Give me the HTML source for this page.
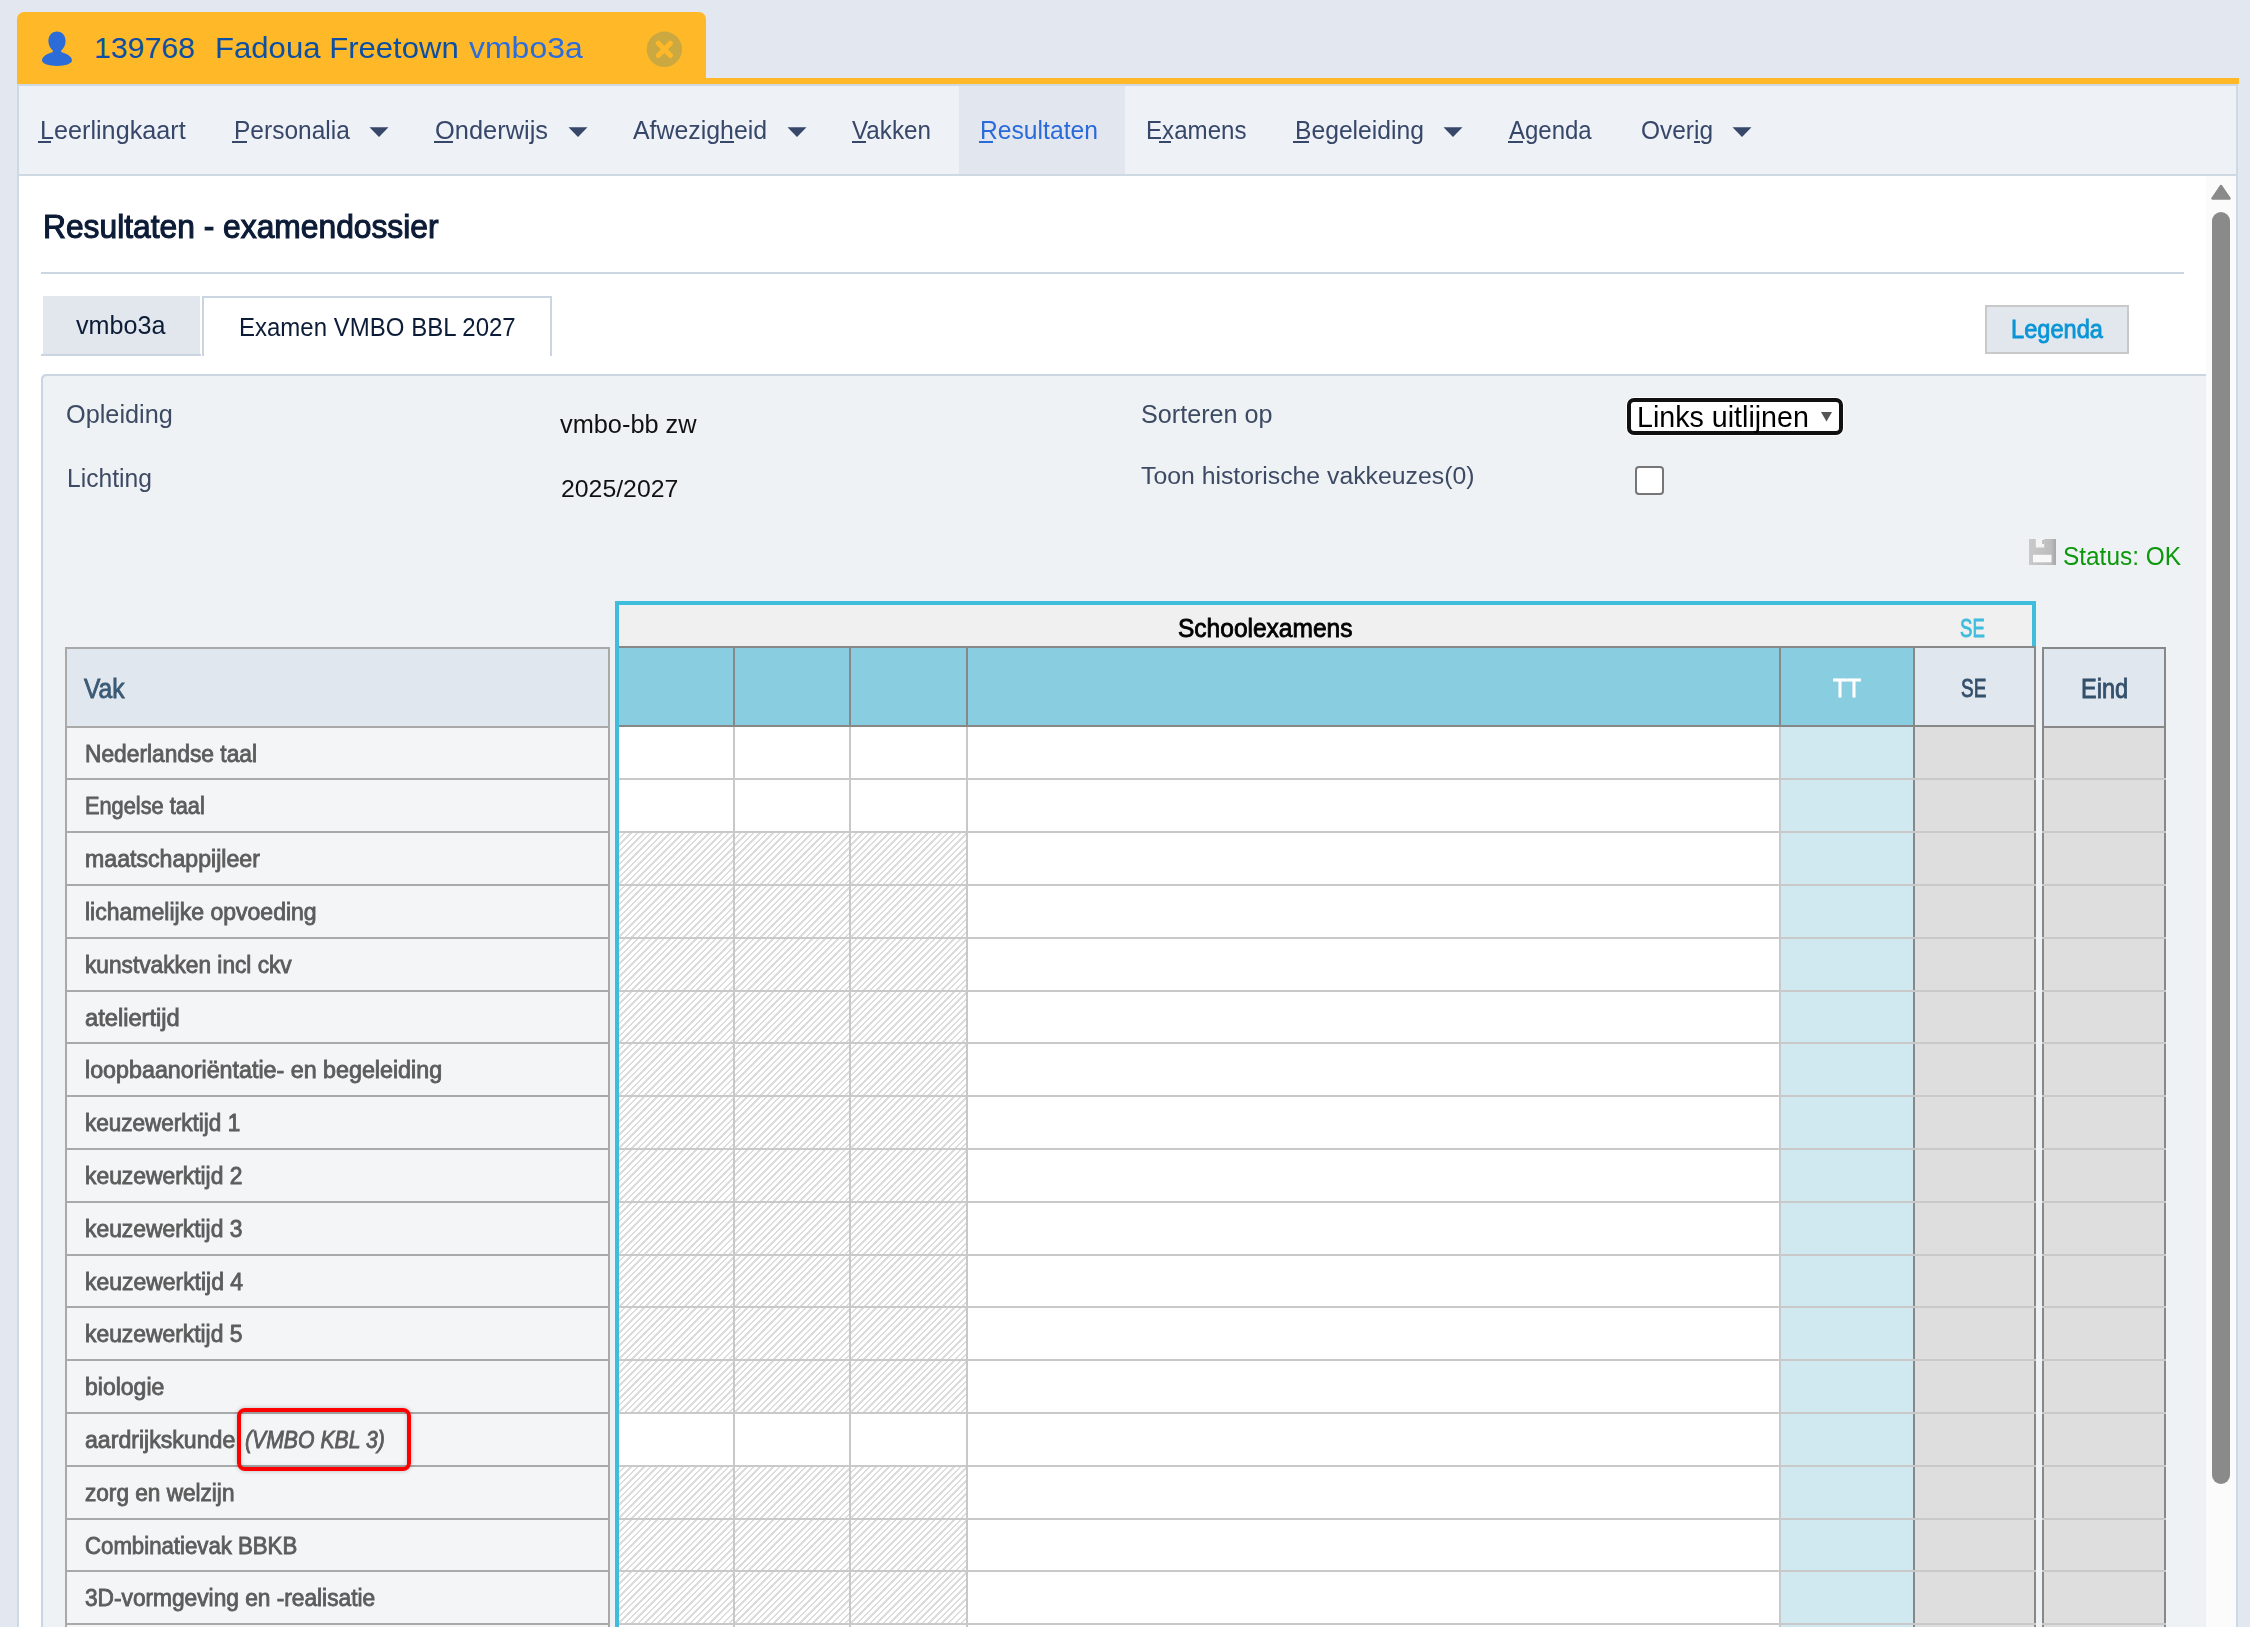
<!DOCTYPE html>
<html><head><meta charset="utf-8"><title>Resultaten - examendossier</title>
<style>
html,body{margin:0;padding:0;}
body{width:2250px;height:1627px;overflow:hidden;position:relative;background:#e3e7ef;font-family:"Liberation Sans",sans-serif;}
.r{position:absolute;box-sizing:content-box;}
.t{position:absolute;white-space:nowrap;transform-origin:0 0;}
</style></head><body>
<div class="r" style="left:17px;top:12px;width:689px;height:72px;background:#ffb928;border-radius:7px 7px 0 0;"></div>
<div class="r" style="left:17px;top:78px;width:2222px;height:6px;background:#ffb928;"></div>
<div class="r" style="left:17px;top:84px;width:2221px;height:1543px;background:#cfd9e4;"></div>
<div class="r" style="left:19px;top:86px;width:2217px;height:88px;background:#eef1f5;"></div>
<div class="r" style="left:959px;top:86px;width:166px;height:88px;background:#e2e7ef;"></div>
<div class="r" style="left:19px;top:176px;width:2217px;height:1451px;background:#ffffff;"></div>
<svg class="r" style="left:38px;top:28px" width="38" height="42" viewBox="0 0 38 42">
<path fill="#2b6cd9" d="M19 3.5c5.2 0 8.6 4.2 8.6 9.6 0 4.2-2 7.6-4.4 9.3l0 1.6c5.4 1.6 10.8 4.4 10.8 8.3 0 3.6-6.8 5.6-15 5.6s-15-2-15-5.6c0-3.9 5.4-6.7 10.8-8.3l0-1.6c-2.4-1.7-4.4-5.1-4.4-9.3 0-5.4 3.4-9.6 8.6-9.6z"/>
</svg>
<svg class="r" style="left:646px;top:31px" width="37" height="37" viewBox="0 0 37 37">
<circle cx="18.4" cy="18.3" r="17.7" fill="#cca840"/>
<path d="M12.3 12.2L24.5 24.4M24.5 12.2L12.3 24.4" stroke="#ffb928" stroke-width="5" stroke-linecap="round"/>
</svg>
<div class="t" style="left:94.00px;top:33.01px;font-size:30.23px;line-height:30.23px;color:#0c4fa3;">139768<span class="bm" style="display:inline-block;width:0;height:0;vertical-align:baseline"></span></div>
<div class="t" style="left:215.00px;top:33.01px;font-size:30.23px;line-height:30.23px;color:#0c4fa3;transform:scaleX(1.0295);">Fadoua Freetown<span class="bm" style="display:inline-block;width:0;height:0;vertical-align:baseline"></span></div>
<div class="t" style="left:469.40px;top:33.01px;font-size:30.23px;line-height:30.23px;color:#2d6ddb;transform:scaleX(1.0580);">vmbo3a<span class="bm" style="display:inline-block;width:0;height:0;vertical-align:baseline"></span></div>
<div class="t" style="left:40.20px;top:118.01px;font-size:25.15px;line-height:25.15px;color:#37476a;transform:scaleX(1.0021);">Leerlingkaart<span class="bm" style="display:inline-block;width:0;height:0;vertical-align:baseline"></span></div>
<div class="r" style="left:38px;top:141px;width:13px;height:2px;background:#37476a;"></div>
<div class="t" style="left:234.00px;top:118.01px;font-size:25.15px;line-height:25.15px;color:#37476a;transform:scaleX(0.9748);">Personalia<span class="bm" style="display:inline-block;width:0;height:0;vertical-align:baseline"></span></div>
<div class="r" style="left:232px;top:141px;width:15px;height:2px;background:#37476a;"></div>
<svg class="r" style="left:369px;top:126px" width="20" height="12" viewBox="0 0 20 12"><path d="M0.5 1.2h19L10 11z" fill="#37476a"/></svg>
<div class="t" style="left:435.00px;top:118.01px;font-size:25.15px;line-height:25.15px;color:#37476a;transform:scaleX(1.0112);">Onderwijs<span class="bm" style="display:inline-block;width:0;height:0;vertical-align:baseline"></span></div>
<div class="r" style="left:434px;top:141px;width:19px;height:2px;background:#37476a;"></div>
<svg class="r" style="left:568px;top:126px" width="20" height="12" viewBox="0 0 20 12"><path d="M0.5 1.2h19L10 11z" fill="#37476a"/></svg>
<div class="t" style="left:633.00px;top:118.01px;font-size:25.15px;line-height:25.15px;color:#37476a;transform:scaleX(0.9889);">Afwezigheid<span class="bm" style="display:inline-block;width:0;height:0;vertical-align:baseline"></span></div>
<div class="r" style="left:720px;top:141px;width:14px;height:2px;background:#37476a;"></div>
<svg class="r" style="left:787px;top:126px" width="20" height="12" viewBox="0 0 20 12"><path d="M0.5 1.2h19L10 11z" fill="#37476a"/></svg>
<div class="t" style="left:852.00px;top:118.01px;font-size:25.15px;line-height:25.15px;color:#37476a;transform:scaleX(0.9634);">Vakken<span class="bm" style="display:inline-block;width:0;height:0;vertical-align:baseline"></span></div>
<div class="r" style="left:852px;top:141px;width:14px;height:2px;background:#37476a;"></div>
<div class="t" style="left:980.00px;top:118.01px;font-size:25.15px;line-height:25.15px;color:#2a6bd9;transform:scaleX(0.9813);">Resultaten<span class="bm" style="display:inline-block;width:0;height:0;vertical-align:baseline"></span></div>
<div class="r" style="left:979px;top:141px;width:14px;height:2px;background:#2a6bd9;"></div>
<div class="t" style="left:1146.00px;top:118.01px;font-size:25.15px;line-height:25.15px;color:#37476a;transform:scaleX(0.9594);">Examens<span class="bm" style="display:inline-block;width:0;height:0;vertical-align:baseline"></span></div>
<div class="r" style="left:1159px;top:141px;width:12px;height:2px;background:#37476a;"></div>
<div class="t" style="left:1295.00px;top:118.01px;font-size:25.15px;line-height:25.15px;color:#37476a;transform:scaleX(0.9810);">Begeleiding<span class="bm" style="display:inline-block;width:0;height:0;vertical-align:baseline"></span></div>
<div class="r" style="left:1293px;top:141px;width:16px;height:2px;background:#37476a;"></div>
<svg class="r" style="left:1443px;top:126px" width="20" height="12" viewBox="0 0 20 12"><path d="M0.5 1.2h19L10 11z" fill="#37476a"/></svg>
<div class="t" style="left:1509.00px;top:118.01px;font-size:25.15px;line-height:25.15px;color:#37476a;transform:scaleX(0.9540);">Agenda<span class="bm" style="display:inline-block;width:0;height:0;vertical-align:baseline"></span></div>
<div class="r" style="left:1508px;top:141px;width:15px;height:2px;background:#37476a;"></div>
<div class="t" style="left:1641.00px;top:118.01px;font-size:25.15px;line-height:25.15px;color:#37476a;transform:scaleX(0.9730);">Overig<span class="bm" style="display:inline-block;width:0;height:0;vertical-align:baseline"></span></div>
<div class="r" style="left:1694px;top:141px;width:6px;height:2px;background:#37476a;"></div>
<svg class="r" style="left:1732px;top:126px" width="20" height="12" viewBox="0 0 20 12"><path d="M0.5 1.2h19L10 11z" fill="#37476a"/></svg>
<div class="r" style="left:2206px;top:176px;width:30px;height:1451px;background:#fbfbfb;"></div>
<svg class="r" style="left:2211px;top:184px" width="20" height="17" viewBox="0 0 20 17"><path d="M10 2L18.5 14.5H1.5Z" fill="#8a8a8a" stroke="#8a8a8a" stroke-width="2.5" stroke-linejoin="round"/></svg>
<div class="r" style="left:2212px;top:212px;width:18px;height:1272px;background:#8a8a8a;border-radius:9px;"></div>
<div class="t" style="left:42.55px;top:211.00px;font-size:32.63px;line-height:32.63px;color:#0c1b36;-webkit-text-stroke:1.10px #0c1b36;transform:scaleX(0.9738);">Resultaten - examendossier<span class="bm" style="display:inline-block;width:0;height:0;vertical-align:baseline"></span></div>
<div class="r" style="left:41px;top:272px;width:2143px;height:2px;background:#cdd7e3;"></div>
<div class="r" style="left:41px;top:354px;width:160px;height:2px;background:#cbd5e1;"></div>
<div class="r" style="left:43px;top:296px;width:157px;height:58px;background:#e2e7ee;"></div>
<div class="r" style="left:202px;top:296px;width:350px;height:60px;background:#cbd5e1;"></div>
<div class="r" style="left:204px;top:298px;width:346px;height:58px;background:#ffffff;"></div>
<div class="t" style="left:76.00px;top:312.01px;font-size:26.16px;line-height:26.16px;color:#0c1b36;transform:scaleX(0.9619);">vmbo3a<span class="bm" style="display:inline-block;width:0;height:0;vertical-align:baseline"></span></div>
<div class="t" style="left:238.70px;top:315.01px;font-size:25.00px;line-height:25.00px;color:#0c1b36;transform:scaleX(0.9604);">Examen VMBO BBL 2027<span class="bm" style="display:inline-block;width:0;height:0;vertical-align:baseline"></span></div>
<div class="r" style="left:1985px;top:305px;width:144px;height:49px;background:#c9c9c9;"></div>
<div class="r" style="left:1987px;top:307px;width:140px;height:45px;background:#e2e7ee;"></div>
<div class="t" style="left:2011.42px;top:316.01px;font-size:26.13px;line-height:26.13px;color:#0b95d6;-webkit-text-stroke:0.85px #0b95d6;transform:scaleX(0.9034);">Legenda<span class="bm" style="display:inline-block;width:0;height:0;vertical-align:baseline"></span></div>
<div class="r" style="left:41px;top:374px;width:2165px;height:1253px;background:#cbd5e1;border-top-left-radius:5px;"></div>
<div class="r" style="left:43px;top:376px;width:2163px;height:1251px;background:#eef2f5;border-top-left-radius:4px;"></div>
<div class="t" style="left:66.00px;top:402.01px;font-size:25.15px;line-height:25.15px;color:#3d4a63;transform:scaleX(1.0052);">Opleiding<span class="bm" style="display:inline-block;width:0;height:0;vertical-align:baseline"></span></div>
<div class="t" style="left:67.00px;top:466.01px;font-size:25.15px;line-height:25.15px;color:#3d4a63;transform:scaleX(0.9798);">Lichting<span class="bm" style="display:inline-block;width:0;height:0;vertical-align:baseline"></span></div>
<div class="t" style="left:560.20px;top:412.01px;font-size:25.00px;line-height:25.00px;color:#111111;transform:scaleX(1.0133);">vmbo-bb zw<span class="bm" style="display:inline-block;width:0;height:0;vertical-align:baseline"></span></div>
<div class="t" style="left:560.70px;top:477.00px;font-size:24.71px;line-height:24.71px;color:#111111;transform:scaleX(1.0047);">2025/2027<span class="bm" style="display:inline-block;width:0;height:0;vertical-align:baseline"></span></div>
<div class="t" style="left:1141.00px;top:402.01px;font-size:24.86px;line-height:24.86px;color:#3d4a63;transform:scaleX(1.0127);">Sorteren op<span class="bm" style="display:inline-block;width:0;height:0;vertical-align:baseline"></span></div>
<div class="t" style="left:1141.00px;top:464.00px;font-size:24.56px;line-height:24.56px;color:#3d4a63;transform:scaleX(1.0100);">Toon historische vakkeuzes(0)<span class="bm" style="display:inline-block;width:0;height:0;vertical-align:baseline"></span></div>
<div class="r" style="left:1626px;top:397px;width:218px;height:39px;background:#ffffff;border-radius:8px;"></div>
<div class="r" style="left:1627px;top:398px;width:208px;height:29px;border:4px solid #111;border-radius:7px;background:#fff"></div>
<div class="t" style="left:1637.00px;top:402.01px;font-size:29.80px;line-height:29.80px;color:#000;transform:scaleX(0.9609);">Links uitlijnen<span class="bm" style="display:inline-block;width:0;height:0;vertical-align:baseline"></span></div>
<svg class="r" style="left:1820px;top:411px" width="13" height="11" viewBox="0 0 13 11"><path d="M1 1h11L6.5 10.5z" fill="#555"/></svg>
<div class="r" style="left:1635px;top:466px;width:25px;height:25px;border:2px solid #767676;border-radius:4px;background:#fff"></div>
<svg class="r" style="left:2029px;top:539px" width="27" height="26" viewBox="0 0 27 26">
<defs><linearGradient id="fg" x1="0" y1="0" x2="1" y2="0"><stop offset="0" stop-color="#c9c9c9"/><stop offset="0.8" stop-color="#bdbdbd"/><stop offset="1" stop-color="#a6a6ae"/></linearGradient><filter id="fb"><feGaussianBlur stdDeviation="0.6"/></filter></defs>
<rect x="0" y="0" width="27" height="26" fill="url(#fg)"/>
<g filter="url(#fb)"><rect x="6.8" y="-2" width="8.4" height="10.5" fill="#f4f4f4"/>
<rect x="13.5" y="1" width="1.2" height="4" fill="#9a9a9a"/>
<rect x="4" y="15.8" width="18.5" height="7.5" fill="#f8f8f8"/></g>
</svg>
<div class="t" style="left:2063.00px;top:543.01px;font-size:26.16px;line-height:26.16px;color:#0b980b;transform:scaleX(0.9328);">Status: OK<span class="bm" style="display:inline-block;width:0;height:0;vertical-align:baseline"></span></div>
<div class="r" style="left:65px;top:647px;width:545px;height:980px;background:#a9a9a9;"></div>
<div class="r" style="left:67px;top:649px;width:541px;height:77px;background:#e1e7ee;"></div>
<div class="r" style="left:67px;top:728px;width:541px;height:50px;background:#f4f5f7;"></div>
<div class="r" style="left:67px;top:780px;width:541px;height:51px;background:#f4f5f7;"></div>
<div class="r" style="left:67px;top:833px;width:541px;height:51px;background:#f4f5f7;"></div>
<div class="r" style="left:67px;top:886px;width:541px;height:51px;background:#f4f5f7;"></div>
<div class="r" style="left:67px;top:939px;width:541px;height:51px;background:#f4f5f7;"></div>
<div class="r" style="left:67px;top:992px;width:541px;height:50px;background:#f4f5f7;"></div>
<div class="r" style="left:67px;top:1044px;width:541px;height:51px;background:#f4f5f7;"></div>
<div class="r" style="left:67px;top:1097px;width:541px;height:51px;background:#f4f5f7;"></div>
<div class="r" style="left:67px;top:1150px;width:541px;height:51px;background:#f4f5f7;"></div>
<div class="r" style="left:67px;top:1203px;width:541px;height:51px;background:#f4f5f7;"></div>
<div class="r" style="left:67px;top:1256px;width:541px;height:50px;background:#f4f5f7;"></div>
<div class="r" style="left:67px;top:1308px;width:541px;height:51px;background:#f4f5f7;"></div>
<div class="r" style="left:67px;top:1361px;width:541px;height:51px;background:#f4f5f7;"></div>
<div class="r" style="left:67px;top:1414px;width:541px;height:51px;background:#f4f5f7;"></div>
<div class="r" style="left:67px;top:1467px;width:541px;height:51px;background:#f4f5f7;"></div>
<div class="r" style="left:67px;top:1520px;width:541px;height:50px;background:#f4f5f7;"></div>
<div class="r" style="left:67px;top:1572px;width:541px;height:51px;background:#f4f5f7;"></div>
<div class="r" style="left:67px;top:1625px;width:541px;height:2px;background:#f4f5f7;"></div>
<div class="r" style="left:67px;top:1678px;width:541px;height:-51px;background:#f4f5f7;"></div>
<div class="t" style="left:84.42px;top:675.01px;font-size:27.44px;line-height:27.44px;color:#3b5a75;-webkit-text-stroke:0.85px #3b5a75;transform:scaleX(0.8978);">Vak<span class="bm" style="display:inline-block;width:0;height:0;vertical-align:baseline"></span></div>
<div class="t" style="left:85.42px;top:743.00px;font-size:23.37px;line-height:23.37px;color:#5c5c5c;-webkit-text-stroke:0.85px #5c5c5c;transform:scaleX(0.9740);">Nederlandse taal<span class="bm" style="display:inline-block;width:0;height:0;vertical-align:baseline"></span></div>
<div class="t" style="left:85.42px;top:795.00px;font-size:23.37px;line-height:23.37px;color:#5c5c5c;-webkit-text-stroke:0.85px #5c5c5c;transform:scaleX(0.9311);">Engelse taal<span class="bm" style="display:inline-block;width:0;height:0;vertical-align:baseline"></span></div>
<div class="t" style="left:85.42px;top:848.00px;font-size:23.37px;line-height:23.37px;color:#5c5c5c;-webkit-text-stroke:0.85px #5c5c5c;transform:scaleX(0.9901);">maatschappijleer<span class="bm" style="display:inline-block;width:0;height:0;vertical-align:baseline"></span></div>
<div class="t" style="left:85.42px;top:901.00px;font-size:23.37px;line-height:23.37px;color:#5c5c5c;-webkit-text-stroke:0.85px #5c5c5c;transform:scaleX(0.9857);">lichamelijke opvoeding<span class="bm" style="display:inline-block;width:0;height:0;vertical-align:baseline"></span></div>
<div class="t" style="left:85.42px;top:954.00px;font-size:23.37px;line-height:23.37px;color:#5c5c5c;-webkit-text-stroke:0.85px #5c5c5c;transform:scaleX(0.9707);">kunstvakken incl ckv<span class="bm" style="display:inline-block;width:0;height:0;vertical-align:baseline"></span></div>
<div class="t" style="left:85.42px;top:1007.00px;font-size:23.37px;line-height:23.37px;color:#5c5c5c;-webkit-text-stroke:0.85px #5c5c5c;transform:scaleX(1.0134);">ateliertijd<span class="bm" style="display:inline-block;width:0;height:0;vertical-align:baseline"></span></div>
<div class="t" style="left:85.42px;top:1059.00px;font-size:23.37px;line-height:23.37px;color:#5c5c5c;-webkit-text-stroke:0.85px #5c5c5c;transform:scaleX(0.9962);">loopbaanoriëntatie- en begeleiding<span class="bm" style="display:inline-block;width:0;height:0;vertical-align:baseline"></span></div>
<div class="t" style="left:85.42px;top:1112.00px;font-size:23.37px;line-height:23.37px;color:#5c5c5c;-webkit-text-stroke:0.85px #5c5c5c;transform:scaleX(0.9637);">keuzewerktijd 1<span class="bm" style="display:inline-block;width:0;height:0;vertical-align:baseline"></span></div>
<div class="t" style="left:85.42px;top:1165.00px;font-size:23.37px;line-height:23.37px;color:#5c5c5c;-webkit-text-stroke:0.85px #5c5c5c;transform:scaleX(0.9780);">keuzewerktijd 2<span class="bm" style="display:inline-block;width:0;height:0;vertical-align:baseline"></span></div>
<div class="t" style="left:85.42px;top:1218.00px;font-size:23.37px;line-height:23.37px;color:#5c5c5c;-webkit-text-stroke:0.85px #5c5c5c;transform:scaleX(0.9780);">keuzewerktijd 3<span class="bm" style="display:inline-block;width:0;height:0;vertical-align:baseline"></span></div>
<div class="t" style="left:85.42px;top:1271.00px;font-size:23.37px;line-height:23.37px;color:#5c5c5c;-webkit-text-stroke:0.85px #5c5c5c;transform:scaleX(0.9817);">keuzewerktijd 4<span class="bm" style="display:inline-block;width:0;height:0;vertical-align:baseline"></span></div>
<div class="t" style="left:85.42px;top:1323.00px;font-size:23.37px;line-height:23.37px;color:#5c5c5c;-webkit-text-stroke:0.85px #5c5c5c;transform:scaleX(0.9780);">keuzewerktijd 5<span class="bm" style="display:inline-block;width:0;height:0;vertical-align:baseline"></span></div>
<div class="t" style="left:85.42px;top:1376.00px;font-size:23.37px;line-height:23.37px;color:#5c5c5c;-webkit-text-stroke:0.85px #5c5c5c;transform:scaleX(0.9845);">biologie<span class="bm" style="display:inline-block;width:0;height:0;vertical-align:baseline"></span></div>
<div class="t" style="left:85.42px;top:1429.00px;font-size:23.37px;line-height:23.37px;color:#5c5c5c;-webkit-text-stroke:0.85px #5c5c5c;transform:scaleX(0.9891);">aardrijkskunde<span class="bm" style="display:inline-block;width:0;height:0;vertical-align:baseline"></span></div>
<div class="t" style="left:85.42px;top:1482.00px;font-size:23.37px;line-height:23.37px;color:#5c5c5c;-webkit-text-stroke:0.85px #5c5c5c;transform:scaleX(0.9673);">zorg en welzijn<span class="bm" style="display:inline-block;width:0;height:0;vertical-align:baseline"></span></div>
<div class="t" style="left:85.42px;top:1535.00px;font-size:23.37px;line-height:23.37px;color:#5c5c5c;-webkit-text-stroke:0.85px #5c5c5c;transform:scaleX(0.9503);">Combinatievak BBKB<span class="bm" style="display:inline-block;width:0;height:0;vertical-align:baseline"></span></div>
<div class="t" style="left:85.42px;top:1587.00px;font-size:23.37px;line-height:23.37px;color:#5c5c5c;-webkit-text-stroke:0.85px #5c5c5c;transform:scaleX(0.9715);">3D-vormgeving en -realisatie<span class="bm" style="display:inline-block;width:0;height:0;vertical-align:baseline"></span></div>
<div class="r" style="left:615px;top:601px;width:1421px;height:4px;background:#40bcdc;"></div>
<div class="r" style="left:615px;top:601px;width:4px;height:1026px;background:#40bcdc;"></div>
<div class="r" style="left:2032px;top:601px;width:4px;height:45px;background:#40bcdc;"></div>
<div class="r" style="left:619px;top:605px;width:1413px;height:41px;background:#f0f0f0;"></div>
<div class="r" style="left:619px;top:646px;width:1417px;height:2px;background:#888888;"></div>
<div class="t" style="left:1178.02px;top:615.01px;font-size:26.27px;line-height:26.27px;color:#000;-webkit-text-stroke:0.85px #000;transform:scaleX(0.9334);">Schoolexamens<span class="bm" style="display:inline-block;width:0;height:0;vertical-align:baseline"></span></div>
<div class="t" style="left:1960.02px;top:615.01px;font-size:26.56px;line-height:26.56px;color:#40bcdc;-webkit-text-stroke:0.85px #40bcdc;transform:scaleX(0.7000);">SE<span class="bm" style="display:inline-block;width:0;height:0;vertical-align:baseline"></span></div>
<div class="r" style="left:619px;top:648px;width:1294px;height:78px;background:#88cde0;"></div>
<div class="r" style="left:1915px;top:648px;width:119px;height:78px;background:#e1e7ef;"></div>
<div class="r" style="left:733px;top:648px;width:2px;height:78px;background:#888888;"></div>
<div class="r" style="left:849px;top:648px;width:2px;height:78px;background:#888888;"></div>
<div class="r" style="left:966px;top:648px;width:2px;height:78px;background:#888888;"></div>
<div class="r" style="left:1779px;top:648px;width:2px;height:78px;background:#888888;"></div>
<div class="r" style="left:1913px;top:648px;width:2px;height:78px;background:#888888;"></div>
<div class="r" style="left:2034px;top:648px;width:2px;height:78px;background:#888888;"></div>
<div class="r" style="left:619px;top:725px;width:1417px;height:2px;background:#888888;"></div>
<div class="t" style="left:1832.83px;top:675.01px;font-size:26.56px;line-height:26.56px;color:#ffffff;-webkit-text-stroke:0.85px #ffffff;transform:scaleX(0.8631);">TT<span class="bm" style="display:inline-block;width:0;height:0;vertical-align:baseline"></span></div>
<div class="t" style="left:1961.42px;top:675.01px;font-size:26.56px;line-height:26.56px;color:#34506b;-webkit-text-stroke:0.85px #34506b;transform:scaleX(0.7169);">SE<span class="bm" style="display:inline-block;width:0;height:0;vertical-align:baseline"></span></div>
<div class="r" style="left:619px;top:727px;width:1160px;height:900px;background:#ffffff;"></div>
<div class="r" style="left:1781px;top:727px;width:132px;height:900px;background:#d0e8ef;"></div>
<div class="r" style="left:1915px;top:727px;width:119px;height:900px;background:#dedede;"></div>
<div class="r" style="left:619px;top:833px;width:114px;height:51px;background:repeating-linear-gradient(135deg,#ffffff 0px,#ffffff 3.1px,#dcdcdc 3.1px,#dcdcdc 4.6px);"></div>
<div class="r" style="left:735px;top:833px;width:114px;height:51px;background:repeating-linear-gradient(135deg,#ffffff 0px,#ffffff 3.1px,#dcdcdc 3.1px,#dcdcdc 4.6px);"></div>
<div class="r" style="left:851px;top:833px;width:115px;height:51px;background:repeating-linear-gradient(135deg,#ffffff 0px,#ffffff 3.1px,#dcdcdc 3.1px,#dcdcdc 4.6px);"></div>
<div class="r" style="left:619px;top:886px;width:114px;height:51px;background:repeating-linear-gradient(135deg,#ffffff 0px,#ffffff 3.1px,#dcdcdc 3.1px,#dcdcdc 4.6px);"></div>
<div class="r" style="left:735px;top:886px;width:114px;height:51px;background:repeating-linear-gradient(135deg,#ffffff 0px,#ffffff 3.1px,#dcdcdc 3.1px,#dcdcdc 4.6px);"></div>
<div class="r" style="left:851px;top:886px;width:115px;height:51px;background:repeating-linear-gradient(135deg,#ffffff 0px,#ffffff 3.1px,#dcdcdc 3.1px,#dcdcdc 4.6px);"></div>
<div class="r" style="left:619px;top:939px;width:114px;height:51px;background:repeating-linear-gradient(135deg,#ffffff 0px,#ffffff 3.1px,#dcdcdc 3.1px,#dcdcdc 4.6px);"></div>
<div class="r" style="left:735px;top:939px;width:114px;height:51px;background:repeating-linear-gradient(135deg,#ffffff 0px,#ffffff 3.1px,#dcdcdc 3.1px,#dcdcdc 4.6px);"></div>
<div class="r" style="left:851px;top:939px;width:115px;height:51px;background:repeating-linear-gradient(135deg,#ffffff 0px,#ffffff 3.1px,#dcdcdc 3.1px,#dcdcdc 4.6px);"></div>
<div class="r" style="left:619px;top:992px;width:114px;height:50px;background:repeating-linear-gradient(135deg,#ffffff 0px,#ffffff 3.1px,#dcdcdc 3.1px,#dcdcdc 4.6px);"></div>
<div class="r" style="left:735px;top:992px;width:114px;height:50px;background:repeating-linear-gradient(135deg,#ffffff 0px,#ffffff 3.1px,#dcdcdc 3.1px,#dcdcdc 4.6px);"></div>
<div class="r" style="left:851px;top:992px;width:115px;height:50px;background:repeating-linear-gradient(135deg,#ffffff 0px,#ffffff 3.1px,#dcdcdc 3.1px,#dcdcdc 4.6px);"></div>
<div class="r" style="left:619px;top:1044px;width:114px;height:51px;background:repeating-linear-gradient(135deg,#ffffff 0px,#ffffff 3.1px,#dcdcdc 3.1px,#dcdcdc 4.6px);"></div>
<div class="r" style="left:735px;top:1044px;width:114px;height:51px;background:repeating-linear-gradient(135deg,#ffffff 0px,#ffffff 3.1px,#dcdcdc 3.1px,#dcdcdc 4.6px);"></div>
<div class="r" style="left:851px;top:1044px;width:115px;height:51px;background:repeating-linear-gradient(135deg,#ffffff 0px,#ffffff 3.1px,#dcdcdc 3.1px,#dcdcdc 4.6px);"></div>
<div class="r" style="left:619px;top:1097px;width:114px;height:51px;background:repeating-linear-gradient(135deg,#ffffff 0px,#ffffff 3.1px,#dcdcdc 3.1px,#dcdcdc 4.6px);"></div>
<div class="r" style="left:735px;top:1097px;width:114px;height:51px;background:repeating-linear-gradient(135deg,#ffffff 0px,#ffffff 3.1px,#dcdcdc 3.1px,#dcdcdc 4.6px);"></div>
<div class="r" style="left:851px;top:1097px;width:115px;height:51px;background:repeating-linear-gradient(135deg,#ffffff 0px,#ffffff 3.1px,#dcdcdc 3.1px,#dcdcdc 4.6px);"></div>
<div class="r" style="left:619px;top:1150px;width:114px;height:51px;background:repeating-linear-gradient(135deg,#ffffff 0px,#ffffff 3.1px,#dcdcdc 3.1px,#dcdcdc 4.6px);"></div>
<div class="r" style="left:735px;top:1150px;width:114px;height:51px;background:repeating-linear-gradient(135deg,#ffffff 0px,#ffffff 3.1px,#dcdcdc 3.1px,#dcdcdc 4.6px);"></div>
<div class="r" style="left:851px;top:1150px;width:115px;height:51px;background:repeating-linear-gradient(135deg,#ffffff 0px,#ffffff 3.1px,#dcdcdc 3.1px,#dcdcdc 4.6px);"></div>
<div class="r" style="left:619px;top:1203px;width:114px;height:51px;background:repeating-linear-gradient(135deg,#ffffff 0px,#ffffff 3.1px,#dcdcdc 3.1px,#dcdcdc 4.6px);"></div>
<div class="r" style="left:735px;top:1203px;width:114px;height:51px;background:repeating-linear-gradient(135deg,#ffffff 0px,#ffffff 3.1px,#dcdcdc 3.1px,#dcdcdc 4.6px);"></div>
<div class="r" style="left:851px;top:1203px;width:115px;height:51px;background:repeating-linear-gradient(135deg,#ffffff 0px,#ffffff 3.1px,#dcdcdc 3.1px,#dcdcdc 4.6px);"></div>
<div class="r" style="left:619px;top:1256px;width:114px;height:50px;background:repeating-linear-gradient(135deg,#ffffff 0px,#ffffff 3.1px,#dcdcdc 3.1px,#dcdcdc 4.6px);"></div>
<div class="r" style="left:735px;top:1256px;width:114px;height:50px;background:repeating-linear-gradient(135deg,#ffffff 0px,#ffffff 3.1px,#dcdcdc 3.1px,#dcdcdc 4.6px);"></div>
<div class="r" style="left:851px;top:1256px;width:115px;height:50px;background:repeating-linear-gradient(135deg,#ffffff 0px,#ffffff 3.1px,#dcdcdc 3.1px,#dcdcdc 4.6px);"></div>
<div class="r" style="left:619px;top:1308px;width:114px;height:51px;background:repeating-linear-gradient(135deg,#ffffff 0px,#ffffff 3.1px,#dcdcdc 3.1px,#dcdcdc 4.6px);"></div>
<div class="r" style="left:735px;top:1308px;width:114px;height:51px;background:repeating-linear-gradient(135deg,#ffffff 0px,#ffffff 3.1px,#dcdcdc 3.1px,#dcdcdc 4.6px);"></div>
<div class="r" style="left:851px;top:1308px;width:115px;height:51px;background:repeating-linear-gradient(135deg,#ffffff 0px,#ffffff 3.1px,#dcdcdc 3.1px,#dcdcdc 4.6px);"></div>
<div class="r" style="left:619px;top:1361px;width:114px;height:51px;background:repeating-linear-gradient(135deg,#ffffff 0px,#ffffff 3.1px,#dcdcdc 3.1px,#dcdcdc 4.6px);"></div>
<div class="r" style="left:735px;top:1361px;width:114px;height:51px;background:repeating-linear-gradient(135deg,#ffffff 0px,#ffffff 3.1px,#dcdcdc 3.1px,#dcdcdc 4.6px);"></div>
<div class="r" style="left:851px;top:1361px;width:115px;height:51px;background:repeating-linear-gradient(135deg,#ffffff 0px,#ffffff 3.1px,#dcdcdc 3.1px,#dcdcdc 4.6px);"></div>
<div class="r" style="left:619px;top:1467px;width:114px;height:51px;background:repeating-linear-gradient(135deg,#ffffff 0px,#ffffff 3.1px,#dcdcdc 3.1px,#dcdcdc 4.6px);"></div>
<div class="r" style="left:735px;top:1467px;width:114px;height:51px;background:repeating-linear-gradient(135deg,#ffffff 0px,#ffffff 3.1px,#dcdcdc 3.1px,#dcdcdc 4.6px);"></div>
<div class="r" style="left:851px;top:1467px;width:115px;height:51px;background:repeating-linear-gradient(135deg,#ffffff 0px,#ffffff 3.1px,#dcdcdc 3.1px,#dcdcdc 4.6px);"></div>
<div class="r" style="left:619px;top:1520px;width:114px;height:50px;background:repeating-linear-gradient(135deg,#ffffff 0px,#ffffff 3.1px,#dcdcdc 3.1px,#dcdcdc 4.6px);"></div>
<div class="r" style="left:735px;top:1520px;width:114px;height:50px;background:repeating-linear-gradient(135deg,#ffffff 0px,#ffffff 3.1px,#dcdcdc 3.1px,#dcdcdc 4.6px);"></div>
<div class="r" style="left:851px;top:1520px;width:115px;height:50px;background:repeating-linear-gradient(135deg,#ffffff 0px,#ffffff 3.1px,#dcdcdc 3.1px,#dcdcdc 4.6px);"></div>
<div class="r" style="left:619px;top:1572px;width:114px;height:51px;background:repeating-linear-gradient(135deg,#ffffff 0px,#ffffff 3.1px,#dcdcdc 3.1px,#dcdcdc 4.6px);"></div>
<div class="r" style="left:735px;top:1572px;width:114px;height:51px;background:repeating-linear-gradient(135deg,#ffffff 0px,#ffffff 3.1px,#dcdcdc 3.1px,#dcdcdc 4.6px);"></div>
<div class="r" style="left:851px;top:1572px;width:115px;height:51px;background:repeating-linear-gradient(135deg,#ffffff 0px,#ffffff 3.1px,#dcdcdc 3.1px,#dcdcdc 4.6px);"></div>
<div class="r" style="left:2041px;top:1627px;width:1px;height:0px;background:#000;"></div>
<div class="r" style="left:733px;top:727px;width:2px;height:900px;background:#c8c8c8;"></div>
<div class="r" style="left:849px;top:727px;width:2px;height:900px;background:#c8c8c8;"></div>
<div class="r" style="left:966px;top:727px;width:2px;height:900px;background:#c8c8c8;"></div>
<div class="r" style="left:1779px;top:727px;width:2px;height:900px;background:#c8c8c8;"></div>
<div class="r" style="left:1913px;top:727px;width:2px;height:900px;background:#888888;"></div>
<div class="r" style="left:2034px;top:727px;width:2px;height:900px;background:#888888;"></div>
<div class="r" style="left:67px;top:778px;width:541px;height:2px;background:#a9a9a9;"></div>
<div class="r" style="left:619px;top:778px;width:1417px;height:2px;background:#c9c9c9;"></div>
<div class="r" style="left:67px;top:831px;width:541px;height:2px;background:#a9a9a9;"></div>
<div class="r" style="left:619px;top:831px;width:1417px;height:2px;background:#c9c9c9;"></div>
<div class="r" style="left:67px;top:884px;width:541px;height:2px;background:#a9a9a9;"></div>
<div class="r" style="left:619px;top:884px;width:1417px;height:2px;background:#c9c9c9;"></div>
<div class="r" style="left:67px;top:937px;width:541px;height:2px;background:#a9a9a9;"></div>
<div class="r" style="left:619px;top:937px;width:1417px;height:2px;background:#c9c9c9;"></div>
<div class="r" style="left:67px;top:990px;width:541px;height:2px;background:#a9a9a9;"></div>
<div class="r" style="left:619px;top:990px;width:1417px;height:2px;background:#c9c9c9;"></div>
<div class="r" style="left:67px;top:1042px;width:541px;height:2px;background:#a9a9a9;"></div>
<div class="r" style="left:619px;top:1042px;width:1417px;height:2px;background:#c9c9c9;"></div>
<div class="r" style="left:67px;top:1095px;width:541px;height:2px;background:#a9a9a9;"></div>
<div class="r" style="left:619px;top:1095px;width:1417px;height:2px;background:#c9c9c9;"></div>
<div class="r" style="left:67px;top:1148px;width:541px;height:2px;background:#a9a9a9;"></div>
<div class="r" style="left:619px;top:1148px;width:1417px;height:2px;background:#c9c9c9;"></div>
<div class="r" style="left:67px;top:1201px;width:541px;height:2px;background:#a9a9a9;"></div>
<div class="r" style="left:619px;top:1201px;width:1417px;height:2px;background:#c9c9c9;"></div>
<div class="r" style="left:67px;top:1254px;width:541px;height:2px;background:#a9a9a9;"></div>
<div class="r" style="left:619px;top:1254px;width:1417px;height:2px;background:#c9c9c9;"></div>
<div class="r" style="left:67px;top:1306px;width:541px;height:2px;background:#a9a9a9;"></div>
<div class="r" style="left:619px;top:1306px;width:1417px;height:2px;background:#c9c9c9;"></div>
<div class="r" style="left:67px;top:1359px;width:541px;height:2px;background:#a9a9a9;"></div>
<div class="r" style="left:619px;top:1359px;width:1417px;height:2px;background:#c9c9c9;"></div>
<div class="r" style="left:67px;top:1412px;width:541px;height:2px;background:#a9a9a9;"></div>
<div class="r" style="left:619px;top:1412px;width:1417px;height:2px;background:#c9c9c9;"></div>
<div class="r" style="left:67px;top:1465px;width:541px;height:2px;background:#a9a9a9;"></div>
<div class="r" style="left:619px;top:1465px;width:1417px;height:2px;background:#c9c9c9;"></div>
<div class="r" style="left:67px;top:1518px;width:541px;height:2px;background:#a9a9a9;"></div>
<div class="r" style="left:619px;top:1518px;width:1417px;height:2px;background:#c9c9c9;"></div>
<div class="r" style="left:67px;top:1570px;width:541px;height:2px;background:#a9a9a9;"></div>
<div class="r" style="left:619px;top:1570px;width:1417px;height:2px;background:#c9c9c9;"></div>
<div class="r" style="left:67px;top:1623px;width:541px;height:2px;background:#a9a9a9;"></div>
<div class="r" style="left:619px;top:1623px;width:1417px;height:2px;background:#c9c9c9;"></div>
<div class="r" style="left:2042px;top:647px;width:124px;height:980px;background:#888888;"></div>
<div class="r" style="left:2044px;top:649px;width:120px;height:77px;background:#e1e7ef;"></div>
<div class="r" style="left:2044px;top:728px;width:120px;height:899px;background:#dedede;"></div>
<div class="r" style="left:2042px;top:778px;width:124px;height:2px;background:#c9c9c9;"></div>
<div class="r" style="left:2042px;top:831px;width:124px;height:2px;background:#c9c9c9;"></div>
<div class="r" style="left:2042px;top:884px;width:124px;height:2px;background:#c9c9c9;"></div>
<div class="r" style="left:2042px;top:937px;width:124px;height:2px;background:#c9c9c9;"></div>
<div class="r" style="left:2042px;top:990px;width:124px;height:2px;background:#c9c9c9;"></div>
<div class="r" style="left:2042px;top:1042px;width:124px;height:2px;background:#c9c9c9;"></div>
<div class="r" style="left:2042px;top:1095px;width:124px;height:2px;background:#c9c9c9;"></div>
<div class="r" style="left:2042px;top:1148px;width:124px;height:2px;background:#c9c9c9;"></div>
<div class="r" style="left:2042px;top:1201px;width:124px;height:2px;background:#c9c9c9;"></div>
<div class="r" style="left:2042px;top:1254px;width:124px;height:2px;background:#c9c9c9;"></div>
<div class="r" style="left:2042px;top:1306px;width:124px;height:2px;background:#c9c9c9;"></div>
<div class="r" style="left:2042px;top:1359px;width:124px;height:2px;background:#c9c9c9;"></div>
<div class="r" style="left:2042px;top:1412px;width:124px;height:2px;background:#c9c9c9;"></div>
<div class="r" style="left:2042px;top:1465px;width:124px;height:2px;background:#c9c9c9;"></div>
<div class="r" style="left:2042px;top:1518px;width:124px;height:2px;background:#c9c9c9;"></div>
<div class="r" style="left:2042px;top:1570px;width:124px;height:2px;background:#c9c9c9;"></div>
<div class="r" style="left:2042px;top:1623px;width:124px;height:2px;background:#c9c9c9;"></div>
<div class="t" style="left:2080.62px;top:676.00px;font-size:27.00px;line-height:27.00px;color:#34506b;-webkit-text-stroke:0.85px #34506b;transform:scaleX(0.8731);">Eind<span class="bm" style="display:inline-block;width:0;height:0;vertical-align:baseline"></span></div>
<div class="r" style="left:237px;top:1408px;width:166px;height:55px;border:4px solid #ff0000;border-radius:8px;box-shadow:0 0 4px rgba(0,0,0,0.25), inset 0 0 4px rgba(0,0,0,0.2)"></div>
<div class="t" style="left:244.83px;top:1429.00px;font-size:23.37px;line-height:23.37px;color:#5c5c5c;-webkit-text-stroke:0.85px #5c5c5c;font-style:italic;transform:scaleX(0.9075);">(VMBO KBL 3)<span class="bm" style="display:inline-block;width:0;height:0;vertical-align:baseline"></span></div>
</body></html>
